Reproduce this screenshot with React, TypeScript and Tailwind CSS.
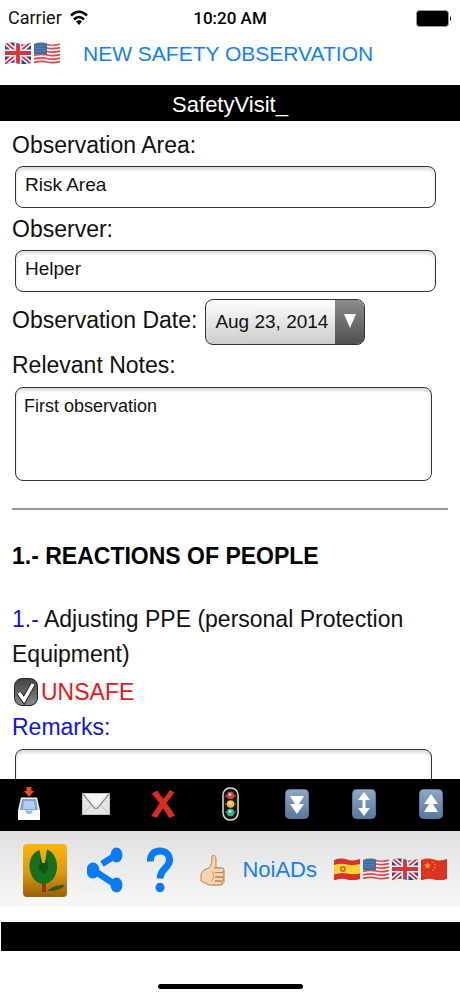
import { useState } from "react";
import type { ReactNode } from "react";

type Country = "gb" | "us" | "es" | "cn";

const flagArt: Record<Country, ReactNode> = {
    gb: (
        <>
            <path fill="#2b4a96" d="M0 0h26v22H0z" />
            <path stroke="#f4f4f4" strokeWidth="5" d="M0 0l26 22M26 0L0 22" />
            <path stroke="#d8343c" strokeWidth="1.8" d="M0 0l26 22M26 0L0 22" />
            <path stroke="#f4f4f4" strokeWidth="7" d="M13 0v22M0 11h26" />
            <path stroke="#d8343c" strokeWidth="3.8" d="M13 0v22M0 11h26" />
        </>
    ),
    us: (
        <>
            <path fill="#f4f0f0" d="M0 0h26v22H0z" />
            <path
                stroke="#d94a50"
                strokeWidth="1.8"
                d="M0 3Q7 1 13 2.500T26 2M0 6.500Q7 4.500 13 6T26 5.500M0 10Q7 8 13 9.500T26 9M0 13.500Q7 11.500 13 13T26 12.500M0 17Q7 15 13 16.500T26 16M0 20.500Q7 18.500 13 20T26 19.500"
            />
            <path fill="#3f6f9f" d="M0 0h13v12H0z" />
            <path stroke="#86a9c8" strokeWidth=".8" strokeDasharray="1 1.6" d="M1 4h11M2 6.500h10M1 9h11" />
        </>
    ),
    es: (
        <>
            <path fill="#d9302a" d="M0 0h26v22H0z" />
            <path fill="#fbd22e" d="M0 7Q7 5 13 6.500T26 6v9.500Q19 17 13 15.500T0 16.500z" />
            <circle cx="9" cy="11" r="3" fill="#b9703a" />
            <circle cx="9" cy="11" r="1.300" fill="#e9c6a0" />
        </>
    ),
    cn: (
        <>
            <path fill="#dc3220" d="M0 0h26v22H0z" />
            <path fill="#f4a32c" d="M6.500 4l1 2.500h2.500l-2 1.700.8 2.600-2.300-1.600-2.300 1.600.8-2.600-2-1.700h2.500z" />
            <g fill="#f4a32c">
                <circle cx="12" cy="4" r=".8" />
                <circle cx="14" cy="6.500" r=".8" />
                <circle cx="14" cy="9.500" r=".8" />
                <circle cx="12" cy="12" r=".8" />
            </g>
        </>
    ),
};

function Flag({ country }: { country: Country }) {
    const clip = `flag-${country}`;
    return (
        <svg viewBox="0 0 29 24" className="h-6 w-[29px]" fill="none" aria-hidden="true">
            <clipPath id={clip}>
                <path d="M0 2Q7-.5 13 1.500T26 1V21Q19 23.500 13 21.500T0 22.500Z" />
            </clipPath>
            <g clipPath={`url(#${clip})`}>{flagArt[country]}</g>
        </svg>
    );
}

function InboxIcon() {
    return (
        <svg viewBox="0 0 24 36" className="h-9 w-6" aria-hidden="true">
            <path d="M4 11.500h16l3 13v9.500H1v-9.500z" fill="#f1f5fa" />
            <path d="M5 13h14l2 11H3z" fill="#7ea3cf" />
            <path d="M7 15h10l1 8H6z" fill="#b3cdee" />
            <path d="M1 24.500h7c0 2 1 4 4 4s4-2 4-4h7V34H1z" fill="#fafcff" />
            <path d="M8.500 24.500c0 2 1 3.500 3.500 3.500s3.500-1.500 3.500-3.500" fill="#9dbbe2" />
            <path d="M9.500 1h5v4H17l-5 6-5-6h2.500z" fill="#ee4722" />
        </svg>
    );
}

function MailIcon() {
    return (
        <svg viewBox="0 0 28 22" className="h-[22px] w-7" aria-hidden="true">
            <path d="M.5.5h27v21H.5z" fill="#e4e4e4" stroke="#c4c4c4" />
            <path d="M1 21l9.500-10M27 21l-9.500-10" stroke="#bcbcbc" fill="none" />
            <path d="M1 1l13 15L27 1z" fill="#f3f3f3" />
            <path d="M1 1l11 13.500q2 2 4 0L27 1" fill="none" stroke="#8d8d8d" strokeWidth="1.200" />
        </svg>
    );
}

function CrossIcon() {
    return (
        <svg viewBox="0 0 24 30" className="h-[30px] w-6" aria-hidden="true">
            <path
                d="M1 4.500L6 1.500 12.500 10 19 1l4.500 2.500L15.500 14 24 26.500l-5.500 2.500L12 19.500 5.500 29 .5 27l8-12.500z"
                fill="#dc2c20"
            />
            <path d="M1 4.500L9 14M.5 27l8-12.500" stroke="#a81a12" fill="none" strokeWidth=".8" />
        </svg>
    );
}

function TrafficLightIcon() {
    return (
        <svg viewBox="0 0 17 34" className="h-[34px] w-[17px]" aria-hidden="true">
            <rect x="1" y="1" width="15" height="32" rx="7" fill="#151515" stroke="#dcdcdc" strokeWidth="1.500" />
            <path d="M3 9h11M3 17h11M3 25h11" stroke="#8a7f6a" />
            <circle cx="8.500" cy="8.500" r="3.800" fill="#e03c3a" />
            <circle cx="8.500" cy="17" r="3.800" fill="#f6b53c" />
            <circle cx="8.500" cy="25.500" r="3.800" fill="#36b58d" />
            <g fill="#fff" opacity=".7">
                <circle cx="8" cy="7.500" r="1.400" />
                <circle cx="8" cy="16" r="1.400" />
                <circle cx="8" cy="24.500" r="1.400" />
            </g>
        </svg>
    );
}

function ArrowTile({ id, path }: { id: string; path: string }) {
    return (
        <svg viewBox="0 0 24 30" className="h-[30px] w-6" aria-hidden="true">
            <linearGradient id={id} x2="0" y2="1">
                <stop stopColor="#8fa9c5" />
                <stop offset="1" stopColor="#56789e" />
            </linearGradient>
            <rect x=".5" y=".5" width="23" height="29" rx="4" fill={`url(#${id})`} stroke="#59779a" />
            <path d={path} fill="#fff" />
        </svg>
    );
}

function LeafIcon() {
    return (
        <svg viewBox="0 0 44 53" className="h-[53px] w-11" aria-hidden="true">
            <linearGradient id="leaf-bg" x2="0" y2="1">
                <stop stopColor="#fbb60c" />
                <stop offset=".55" stopColor="#dc9812" />
                <stop offset="1" stopColor="#96600c" />
            </linearGradient>
            <rect width="44" height="53" rx="4" fill="url(#leaf-bg)" />
            <path d="M19 38h4v10h-4z" fill="#8b3a12" />
            <path
                d="M16.500 6C9.500 8 6 16 6.500 24c1 9 7 16 14 16s13-7 13.500-16C34.500 16 31 8 24 5.500L22 19h-3z"
                fill="#17701e"
            />
            <path d="M17.500 13l1.500 6h3l1.500-6 2 12-5 5-5-5z" fill="#0e5516" />
            <path d="M25 47c3-4 9-6 17-6-3 4-9 6-17 6z" fill="#2f5b10" />
        </svg>
    );
}

function ShareIcon() {
    return (
        <svg viewBox="2 2 40 48" className="h-12 w-10" aria-hidden="true">
            <path d="M2 16L14 4M2 24L22 4M2 32L30 4M2 46L38 10M12 46l26-26M22 46l16-16" stroke="#dbe5ef" />
            <path d="M17 20L31 11M8 26l23 15" stroke="#087cf8" strokeWidth="6.500" />
            <ellipse cx="31.500" cy="11" rx="6" ry="7.500" fill="#087cf8" />
            <ellipse cx="8" cy="26.500" rx="6.500" ry="8" fill="#087cf8" />
            <ellipse cx="31.500" cy="41" rx="6" ry="7.500" fill="#087cf8" />
        </svg>
    );
}

function HelpIcon() {
    return (
        <svg viewBox="0 0 26 46" className="h-[46px] w-[26px]" aria-hidden="true">
            <path
                d="M3.500 14.500C3 7.500 7 4 13 4S22.500 8 22.500 13c0 8-9 8-9.500 18.500"
                fill="none"
                stroke="#087cf8"
                strokeWidth="7"
            />
            <ellipse cx="13" cy="40.500" rx="4.500" ry="4.800" fill="#087cf8" />
        </svg>
    );
}

function ThumbIcon() {
    return (
        <svg viewBox="0 0 25 32" className="h-8 w-[25px]" aria-hidden="true">
            <g fill="#f5d5b0" stroke="#b98255" strokeWidth="1">
                <path d="M1 20l3-4 5-2c3-3 3-8 3-12 2-2 4 0 4 3v9h5c2 0 3 1 3 3v10c0 2-1 4-4 4H9l-4-2-4-2z" />
                <path d="M14 14h8q2 0 2 2t-2 2.500h-7M15 18.500h7q2 0 2 2t-2 2.500h-7M15 23h6.500q2 0 2 2t-2 2H15M15 27h5q2 0 2 2t-2 2h-7" />
            </g>
            <path d="M12 17c2 2 2 7 0 10" fill="none" stroke="#dd8b69" />
        </svg>
    );
}

const tools = [
    { label: "Save", icon: <InboxIcon /> },
    { label: "Send by mail", icon: <MailIcon /> },
    { label: "Delete", icon: <CrossIcon /> },
    { label: "Status", icon: <TrafficLightIcon /> },
    { label: "Page down", icon: <ArrowTile id="tile-down" path="M5 7h14l-5 8h5l-7 10-7-10h5z" /> },
    { label: "Scroll", icon: <ArrowTile id="tile-both" path="M12 3l6 8h-4.500v8H18l-6 8-6-8h4.500v-8H6z" /> },
    { label: "Page up", icon: <ArrowTile id="tile-up" path="M12 5l7 10h-5l5 8H5l5-8H5z" /> },
];

const fieldClass =
    "block rounded-lg border border-[#333] bg-white leading-6 text-[#111] outline-none shadow-[inset_0_3px_3px_#ddd]";

export default function App() {
    const [area, setArea] = useState("Risk Area");
    const [observer, setObserver] = useState("Helper");
    const [notes, setNotes] = useState("First observation");
    const [unsafe, setUnsafe] = useState(true);

    return (
        <div className="flex h-screen flex-col bg-white font-['Liberation_Sans',Arial,sans-serif] text-[23px] leading-9 text-[#111]">
            <div className="grid h-9 shrink-0 grid-cols-3 items-center px-2 font-[Roboto,sans-serif] text-[18px]">
                <div className="flex items-center gap-2">
                    <span>Carrier</span>
                    <svg viewBox="0 0 18 16" className="h-4 w-[18px]" fill="none" stroke="#000" strokeWidth="2.500" aria-hidden="true">
                        <path d="M1 5.500Q9-2 17 5.500M4 9.500q5-5 10 0" />
                        <path d="M9 15l-3-3.500q3-2.500 6 0z" fill="#000" stroke="none" />
                    </svg>
                </div>
                <span className="text-center text-[17px] font-medium text-black">10:20 AM</span>
                <svg viewBox="0 0 36 17" className="h-[17px] w-9 justify-self-end" aria-hidden="true">
                    <rect x=".5" y=".5" width="32" height="16" rx="3" fill="#000" stroke="#999" />
                    <path d="M34 5.500q2 3 0 6z" fill="#000" />
                </svg>
            </div>

            <header className="shrink-0">
                <div className="flex h-[49px] items-start gap-5 px-[5px]">
                    <button type="button" aria-label="Change language" className="flex h-9 items-center">
                        <Flag country="gb" />
                        <Flag country="us" />
                    </button>
                    <a href="#new" className="text-[21px] text-[#157efb]">NEW SAFETY OBSERVATION</a>
                </div>
                <h1 className="h-9 bg-black pt-1 text-center text-[22px] leading-8 text-white">SafetyVisit_</h1>
            </header>

            <main className="min-h-0 flex-1 overflow-y-auto px-3 pt-[6px] [scrollbar-width:none]">
                <label htmlFor="area" className="block">Observation Area:</label>
                <div className="px-[3px] py-[3px]">
                    <input id="area" value={area} onChange={(e) => setArea(e.target.value)} className={`${fieldClass} h-[42px] w-[98%] px-[9px] pb-1 text-[19px]`} />
                </div>
                <label htmlFor="observer" className="block">Observer:</label>
                <div className="px-[3px] py-[3px]">
                    <input id="observer" value={observer} onChange={(e) => setObserver(e.target.value)} className={`${fieldClass} h-[42px] w-[98%] px-[9px] pb-1 text-[19px]`} />
                </div>

                <div className="flex items-start gap-2 pt-1">
                    <label htmlFor="date" className="pt-[3px]">Observation Date:</label>
                    <div className="relative">
                        <select
                            id="date"
                            className="block h-[46px] w-40 appearance-none rounded-lg border border-[#333] bg-linear-to-b from-white to-[#ccc] pl-[9px] text-[19px] text-[#111] outline-none"
                        >
                            <option>Aug 23, 2014</option>
                        </select>
                        <span className="pointer-events-none absolute inset-y-px right-px flex w-[29px] justify-center rounded-r-[7px] bg-linear-to-b from-[#8c8c8c] to-[#505050] pt-[14px]">
                            <svg viewBox="0 0 12 14" className="h-[14px] w-3" fill="#fff" aria-hidden="true">
                                <path d="M0 0h12L6 14z" />
                            </svg>
                        </span>
                    </div>
                </div>

                <label htmlFor="notes" className="block pt-[2px]">Relevant Notes:</label>
                <div className="px-[3px] pt-1">
                    <textarea id="notes" value={notes} onChange={(e) => setNotes(e.target.value)} className={`${fieldClass} h-[94px] w-[97%] resize-none px-2 py-[6px] text-[18px]`} />
                </div>

                <hr className="mt-[27px] border-t-2 border-[#999]" />

                <h2 className="mt-7 font-bold text-black">1.- REACTIONS OF PEOPLE</h2>
                <p className="mt-7 leading-[35px]">
                    <span className="text-[#1414e0]">1.-</span> Adjusting PPE (personal Protection Equipment)
                </p>
                <label className="flex items-center gap-[3px] pt-[2px] pl-[2px] text-[#f01414]">
                    <span className="relative">
                        <input
                            type="checkbox"
                            checked={unsafe}
                            onChange={(e) => setUnsafe(e.target.checked)}
                            className="peer block h-7 w-6 appearance-none rounded-lg border border-[#222] bg-linear-to-b from-[#444] to-[#888]"
                        />
                        <svg viewBox="0 0 24 28" className="pointer-events-none absolute inset-0 hidden h-7 w-6 peer-checked:block" fill="none" aria-hidden="true">
                            <path d="M5 15l5 7L19 6" stroke="#222" strokeWidth="5.500" />
                            <path d="M5 15l5 7L19 6" stroke="#fff" strokeWidth="3.500" />
                        </svg>
                    </span>
                    UNSAFE
                </label>
                <label htmlFor="remarks" className="block leading-[35px] text-[#1414e0]">Remarks:</label>
                <div className="px-[3px] pt-1">
                    <textarea id="remarks" className={`${fieldClass} h-[94px] w-[97%] resize-none px-2 py-[6px] text-[18px]`} />
                </div>
            </main>

            <nav className="flex h-[52px] shrink-0 items-center justify-between bg-black px-[15px] pb-[2px]">
                {tools.map((tool) => (
                    <button key={tool.label} type="button" aria-label={tool.label} className="flex w-7 justify-center">
                        {tool.icon}
                    </button>
                ))}
            </nav>

            <footer className="shrink-0">
                <div className="flex h-[76px] items-center justify-between bg-linear-to-b from-[#e0e0e0] to-[#f8f8f8] pt-[2px] pr-[10px] pl-[23px]">
                    <div className="flex items-center gap-5">
                        <button type="button" aria-label="Home"><LeafIcon /></button>
                        <button type="button" aria-label="Share"><ShareIcon /></button>
                        <button type="button" aria-label="Help"><HelpIcon /></button>
                    </div>
                    <div className="flex items-center gap-[17px]">
                        <button type="button" aria-label="Like"><ThumbIcon /></button>
                        <a href="#noads" className="text-[22px] text-[#157efb]">NoiADs</a>
                        <button type="button" aria-label="Languages" className="flex">
                            <Flag country="es" />
                            <Flag country="us" />
                            <Flag country="gb" />
                            <Flag country="cn" />
                        </button>
                    </div>
                </div>
                <div className="mt-[15px] ml-px h-[29px] bg-black" />
                <div className="mx-auto mt-[33px] mb-[7px] h-[5px] w-[145px] rounded-full bg-black" />
            </footer>
        </div>
    );
}
